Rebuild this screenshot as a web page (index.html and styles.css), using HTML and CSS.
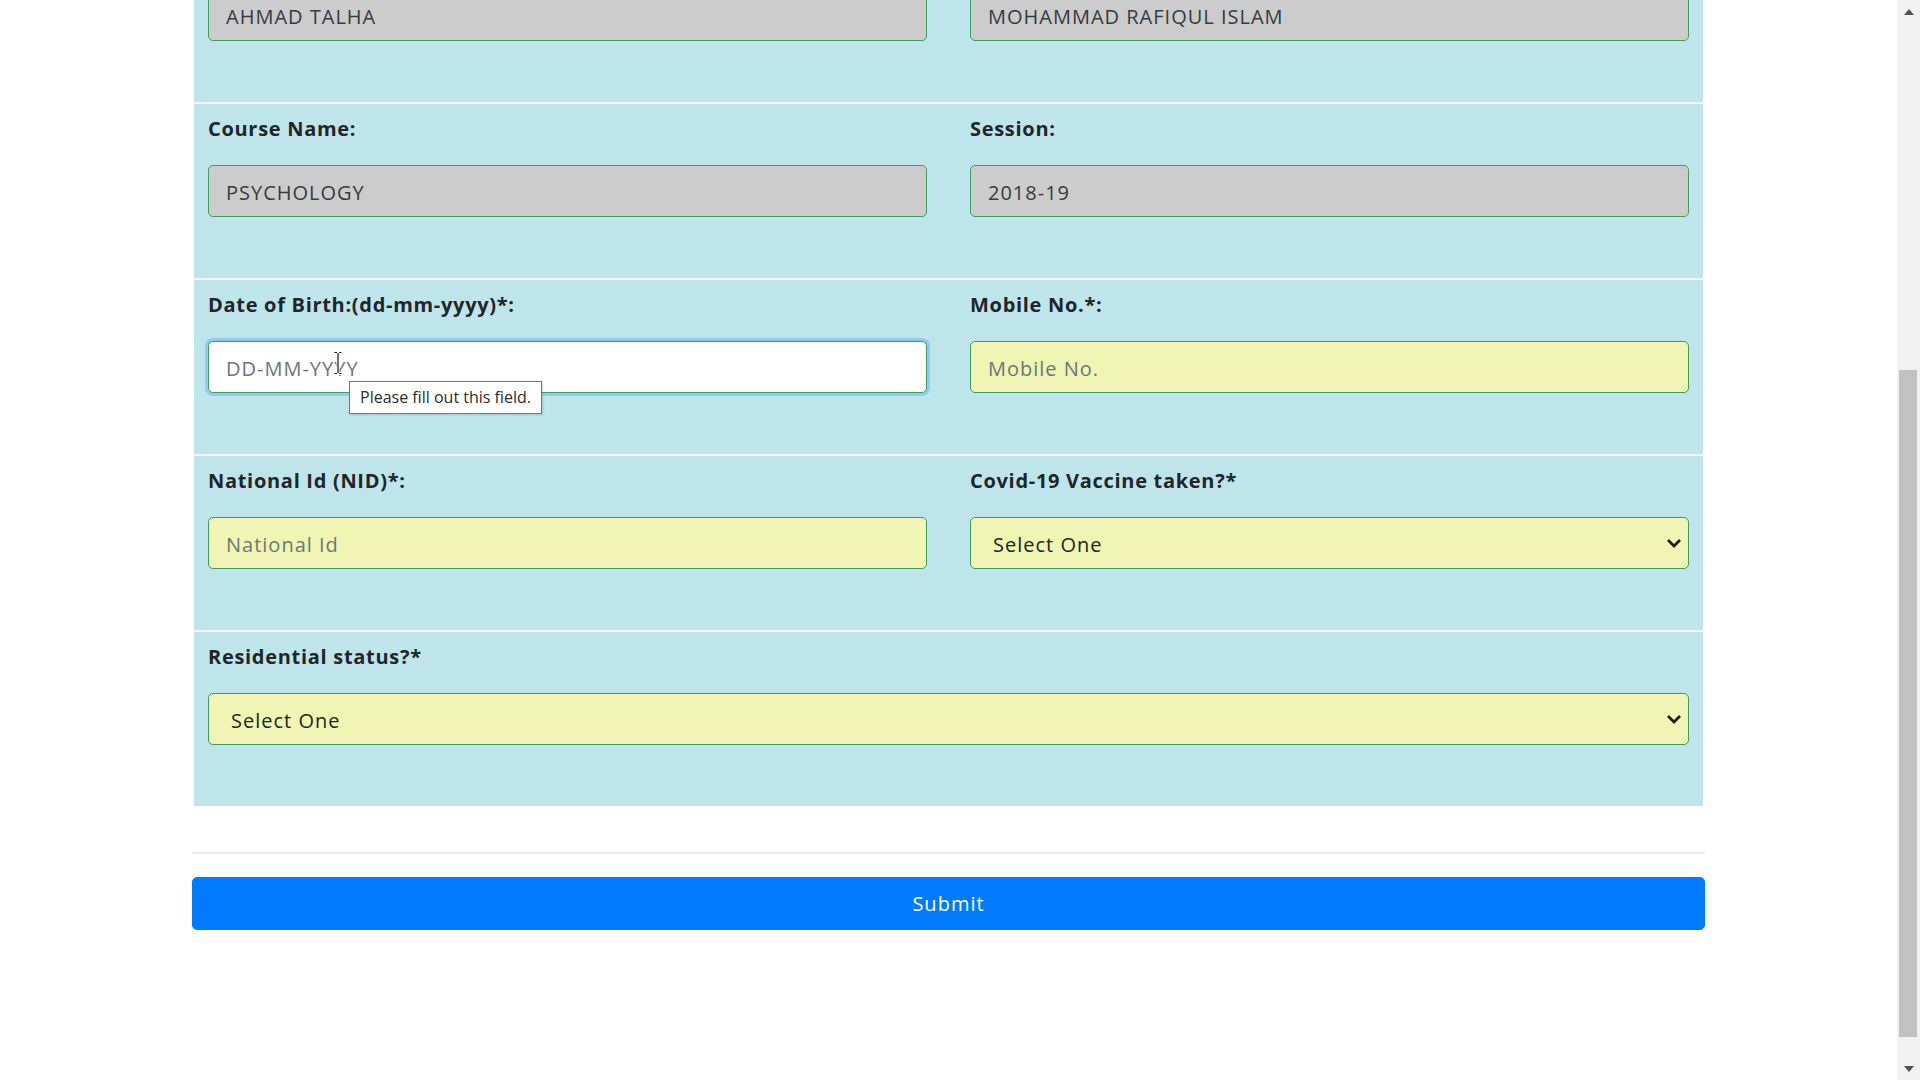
FILE: index.html
```html
<!DOCTYPE html>
<html lang="en">
<head>
<meta charset="utf-8">
<title>Admission Form</title>
<link rel="stylesheet" href="styles.css">
</head>
<body>
<div class="viewport">
  <main class="page">
    <div class="container">
      <form class="panel">
        <div class="section two">
          <div class="field">
            <label class="label">Student Name:</label>
            <input class="control readonly" type="text" value="AHMAD TALHA" readonly>
          </div>
          <div class="field">
            <label class="label">Father's Name:</label>
            <input class="control readonly" type="text" value="MOHAMMAD RAFIQUL ISLAM" readonly>
          </div>
        </div>
        <div class="section two">
          <div class="field">
            <label class="label">Course Name:</label>
            <input class="control readonly" type="text" value="PSYCHOLOGY" readonly>
          </div>
          <div class="field">
            <label class="label">Session:</label>
            <input class="control readonly" type="text" value="2018-19" readonly>
          </div>
        </div>
        <div class="section two">
          <div class="field">
            <label class="label">Date of Birth:(dd-mm-yyyy)*:</label>
            <div class="control-wrap">
              <input class="control focused" type="text" placeholder="DD-MM-YYYY">
              <svg class="ibeam" width="10" height="24" viewBox="0 0 10 24" aria-hidden="true">
                <path d="M1.5 1.5 H4 M6 1.5 H8.5 M5 2 V22 M1.5 22.5 H4 M6 22.5 H8.5" stroke="#fff" stroke-width="3" fill="none"/>
                <path d="M1.5 1.5 H4 M6 1.5 H8.5 M5 2 V22 M1.5 22.5 H4 M6 22.5 H8.5" stroke="#111" stroke-width="1.2" fill="none"/>
              </svg>
              <div class="bubble">Please fill out this field.</div>
            </div>
          </div>
          <div class="field">
            <label class="label">Mobile No.*:</label>
            <input class="control required" type="text" placeholder="Mobile No.">
          </div>
        </div>
        <div class="section two">
          <div class="field">
            <label class="label">National Id (NID)*:</label>
            <input class="control required" type="text" placeholder="National Id">
          </div>
          <div class="field">
            <label class="label">Covid-19 Vaccine taken?*</label>
            <div class="control-wrap">
              <select class="control required select">
                <option>Select One</option>
              </select>
              <svg class="chevron" width="16" height="10" viewBox="0 0 16 10" aria-hidden="true">
                <path d="M2 2 L8 8 L14 2" stroke="#1e1e1e" stroke-width="2.8" fill="none" stroke-linejoin="miter"/>
              </svg>
            </div>
          </div>
        </div>
        <div class="section one">
          <div class="field">
            <label class="label">Residential status?*</label>
            <div class="control-wrap">
              <select class="control required select">
                <option>Select One</option>
              </select>
              <svg class="chevron" width="16" height="10" viewBox="0 0 16 10" aria-hidden="true">
                <path d="M2 2 L8 8 L14 2" stroke="#1e1e1e" stroke-width="2.8" fill="none" stroke-linejoin="miter"/>
              </svg>
            </div>
          </div>
        </div>
      </form>
      <hr class="rule">
      <button class="submit" type="button">Submit</button>
    </div>
  </main>
  <div class="scrollbar" aria-hidden="true">
    <div class="sb-btn"><span class="tri up"></span></div>
    <div class="sb-track"><div class="sb-thumb"></div></div>
    <div class="sb-btn"><span class="tri down"></span></div>
  </div>
</div>
</body>
</html>
```
FILE: styles.css
```css
* { box-sizing: border-box; }

html, body {
  margin: 0;
  padding: 0;
  height: 100%;
  overflow: hidden;
  background: #ffffff;
}

body {
  font-family: "Open Sans", "Noto Sans", sans-serif;
  color: #212529;
}

.viewport {
  display: flex;
  height: 1080px;
  width: 1920px;
}

.page {
  flex: 1;
  overflow: hidden;
}

.container {
  width: 1513px;
  margin: -74px auto 0;
}

.panel {
  margin: 0 2px;
  background: #bee5eb;
}

.section {
  border-top: 2px solid #eef8f9;
  padding: 13px 14px 61px;
  height: 176px;
}

.section.two {
  display: grid;
  grid-template-columns: 1fr 1fr;
  column-gap: 43px;
}

.label {
  display: block;
  font-weight: 700;
  font-size: 20px;
  line-height: 24px;
  letter-spacing: 0.7px;
  margin-bottom: 24px;
  color: #212529;
}

.control-wrap {
  position: relative;
}

.control {
  display: block;
  width: 100%;
  height: 52px;
  margin: 0;
  padding: 2px 17px 0;
  border: 1px solid #3c9f5c;
  border-radius: 5px;
  font-family: inherit;
  font-size: 20px;
  letter-spacing: 1px;
  color: #363b40;
  outline: none;
}

.control::placeholder {
  color: #6c757d;
  opacity: 1;
}

.readonly {
  background: #cccccc;
}

.required {
  background: #f0f5b3;
}

.focused {
  background: #ffffff;
  box-shadow: 0 0 0 3px rgba(90, 170, 255, 0.45);
}

.select {
  -webkit-appearance: none;
  appearance: none;
  padding-left: 22px;
  color: #212529;
}

.chevron {
  position: absolute;
  right: 7px;
  top: 21px;
}

.ibeam {
  position: absolute;
  left: 125px;
  top: 10px;
}

.bubble {
  position: absolute;
  left: 141px;
  top: 40px;
  padding: 5px 10px;
  background: #ffffff;
  border: 1px solid #767676;
  box-shadow: 1px 1px 2px rgba(0, 0, 0, 0.15);
  font-size: 16px;
  line-height: 21px;
  color: #2b2b2b;
  white-space: nowrap;
}

.rule {
  margin: 46px 0 23px;
  border: 0;
  border-top: 2px solid #ececec;
  height: 0;
}

.submit {
  display: block;
  width: 100%;
  height: 53px;
  border: 1px solid #007bff;
  border-radius: 5px;
  background: #007bff;
  color: #ffffff;
  font-family: inherit;
  font-size: 20px;
  letter-spacing: 1px;
}

.scrollbar {
  width: 23px;
  height: 1080px;
  background: #f1f1f1;
  display: flex;
  flex-direction: column;
}

.sb-btn {
  height: 23px;
  display: flex;
  align-items: center;
  justify-content: center;
}

.tri {
  width: 0;
  height: 0;
  border-left: 5px solid transparent;
  border-right: 5px solid transparent;
}

.tri.up {
  border-bottom: 6px solid #505050;
}

.tri.down {
  border-top: 6px solid #505050;
}

.sb-track {
  flex: 1;
}

.sb-thumb {
  margin: 347px 3px 0 2px;
  height: 667px;
  background: #c1c1c1;
}
```
